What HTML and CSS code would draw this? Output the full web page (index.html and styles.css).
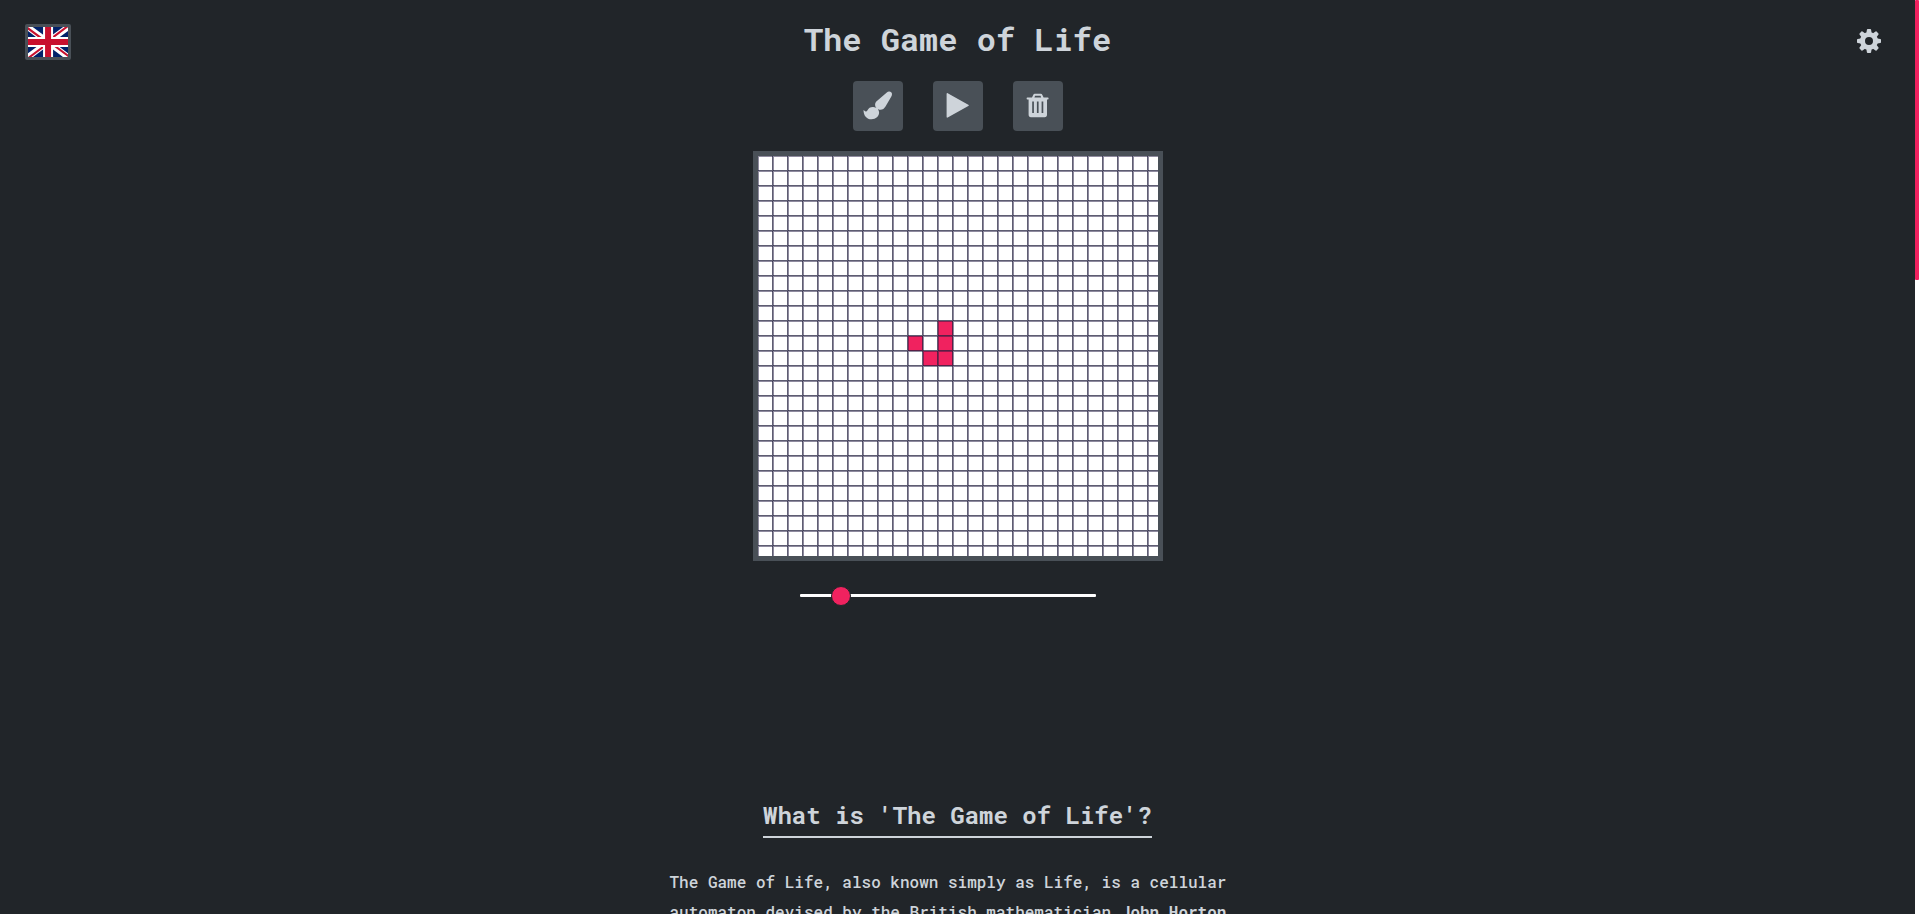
FILE: index.html
```html
<!DOCTYPE html>
<html lang="en">
<head>
<meta charset="utf-8">
<title>The Game of Life</title>
<link rel="stylesheet" href="styles.css">
</head>
<body>
<header class="header">
  <button class="language" type="button" aria-label="Language: English">
    <svg class="flag" viewBox="0 0 640 480" aria-hidden="true">
      <path fill="#012169" d="M0 0h640v480H0z"/>
      <path fill="#fff" d="m75 0 244 181L562 0h78v62L400 241l240 178v61h-80L320 301 81 480H0v-60l239-178L0 64V0z"/>
      <path fill="#c8102e" d="m424 281 216 159v40L369 281zm-184 20 6 35L54 480H0zM640 0v3L391 191l2-44L590 0zM0 0l239 176h-60L0 42z"/>
      <path fill="#fff" d="M241 0v480h160V0zM0 160v160h640V160z"/>
      <path fill="#c8102e" d="M0 193v96h640v-96zM273 0v480h96V0z"/>
    </svg>
  </button>
  <h1 class="title">The Game of Life</h1>
  <button class="settings" type="button" aria-label="Settings">
    <svg class="gear" viewBox="0 0 24 24" aria-hidden="true">
      <defs><path id="tooth" d="M9.200 5 9.900.7Q10 0 10.700 0h2.600q.7 0 .8.700L14.800 5z"/></defs>
      <path fill-rule="evenodd" d="M12 3a9 9 0 1 0 0 18 9 9 0 0 0 0-18zm0 5a4 4 0 1 1 0 8 4 4 0 0 1 0-8z"/>
      <use href="#tooth"/><use href="#tooth" transform="rotate(45 12 12)"/><use href="#tooth" transform="rotate(90 12 12)"/><use href="#tooth" transform="rotate(135 12 12)"/><use href="#tooth" transform="rotate(180 12 12)"/><use href="#tooth" transform="rotate(225 12 12)"/><use href="#tooth" transform="rotate(270 12 12)"/><use href="#tooth" transform="rotate(315 12 12)"/>
    </svg>
  </button>
</header>
<main class="main">
  <div class="controls">
    <button class="control" type="button" aria-label="Draw">
      <svg class="icon" viewBox="0 0 50 50" aria-hidden="true"><path d="M36 10.500C37.500 10.300 39 11.400 39 13c0 1-.3 1.800-.8 2.700L32.500 25.500c-1.200 2-2.900 3.300-5 3.300-3 0-5.400-2.200-5.400-5 0-1.700.8-2.900 2.100-4l9.600-8.300c.7-.5 1.400-.9 2.200-1zM20.200 25.900c3.100.1 5.800 2.300 5.900 5.300.1 4-3.300 7-7.600 7-4.900 0-8-3.600-8-9.300.8.800 2 1.500 2.700 1.500.6 0 1-.4 1.300-1.100 1-2.400 3-3.500 5.700-3.400z"/></svg>
    </button>
    <button class="control" type="button" aria-label="Play">
      <svg class="icon" viewBox="0 0 50 50" aria-hidden="true"><path d="M13.600 12.900c0-.8.500-1 1.100-.7l20.600 11.500c.7.400.7.900 0 1.300L14.700 36.500c-.6.300-1.100.1-1.100-.7z"/></svg>
    </button>
    <button class="control" type="button" aria-label="Clear">
      <svg class="icon" viewBox="0 0 50 50" aria-hidden="true"><path fill-rule="evenodd" d="M19 16.500 20.200 14q.5-1.200 1.600-1.200h6q1.100 0 1.600 1.200l1.200 2.500h4.200q.8 0 .8.900 0 1-.8 1H34V33.500q0 2.700-2.400 2.700H18q-2.400 0-2.400-2.700V18.400h-1.200q-.8 0-.8-1 0-.9.800-.9zm2.400 0h6.800l-.7-1.700h-5.400zM19.200 20.500V32h1.700V20.500zm4.700 0V32h1.700V20.500zm4.700 0V32h1.700V20.500z"/></svg>
    </button>
  </div>
  <svg class="board" width="400" height="400" shape-rendering="crispEdges" role="img" aria-label="Board">
    <defs>
      <pattern id="lines" width="15" height="15" patternUnits="userSpaceOnUse">
        <path class="line-start" d="M0 0h15v1H1v14H0z"/>
        <path class="line-end" d="M14 0h1v15H0v-1h14z"/>
      </pattern>
    </defs>
    <path class="alive" d="M180 165h15v45h-30v-15h15zM150 180h15v15h-15z"/>
    <rect width="400" height="400" fill="url(#lines)"/>
  </svg>
  <input class="speed" type="range" min="0" max="1000" value="113" aria-label="Speed">
  <section class="about">
    <h2 class="heading">What is 'The Game of Life'?</h2>
    <p class="text">The Game of Life, also known simply as Life, is a cellular automaton devised by the British mathematician <strong>John Horton</strong></p>
  </section>
</main>
<div class="scroll-track"><div class="scroll-thumb"></div></div>
</body>
</html>
```
FILE: styles.css
```css
* {
  box-sizing: border-box;
}

html,
body {
  height: 100%;
  overflow: hidden;
}

body {
  margin: 0;
  padding-right: 4px;
  background: #212529;
  color: #ced4da;
  font-family: "Roboto Mono", "DejaVu Sans Mono", monospace;
  font-size: 16px;
  font-weight: 500;
}

button {
  padding: 0;
  border: 0;
  background: none;
  color: inherit;
  cursor: pointer;
}

.header {
  display: grid;
  grid-template-columns: 1fr auto 1fr;
  align-items: center;
  height: 81px;
  padding: 0 25px;
}

.language {
  justify-self: start;
  width: 46px;
  height: 36px;
  margin-top: 2px;
  padding: 3px;
  border-radius: 2px;
  background: #495057;
}

.flag,
.gear,
.icon,
.board {
  display: block;
}

.flag {
  width: 40px;
  height: 30px;
}

.title {
  margin: 0;
  padding-bottom: 4px;
  font-size: 32px;
  line-height: 42px;
}

.settings {
  justify-self: end;
  margin-right: 9px;
}

.gear {
  width: 24px;
  height: 24px;
  fill: currentColor;
}

.main {
  display: flex;
  flex-direction: column;
  align-items: center;
}

.controls {
  display: flex;
  gap: 30px;
  margin-bottom: 20px;
}

.control {
  width: 50px;
  height: 50px;
  border-radius: 4px;
  background: #495057;
}

.icon {
  width: 50px;
  height: 50px;
  fill: currentColor;
}

.board {
  box-sizing: content-box;
  border: 5px solid #495057;
  background: #fff;
}

.line-start {
  fill: rgba(32, 24, 64, 0.5);
}

.line-end {
  fill: rgba(32, 30, 60, 0.72);
}

.alive {
  fill: #f0225f;
}

.speed {
  appearance: none;
  width: 296px;
  height: 20px;
  margin: 24px 20px 0 0;
  background: transparent;
}

.speed::-webkit-slider-runnable-track {
  height: 3px;
  border-radius: 1px;
  background: #fff;
}

.speed::-webkit-slider-thumb {
  appearance: none;
  width: 20px;
  height: 20px;
  margin-top: -8px;
  border: 1px solid #212529;
  border-radius: 50%;
  background: #f0225f;
}

.about {
  display: flex;
  flex-direction: column;
  align-items: center;
  width: 576px;
  margin-top: 193px;
}

.heading {
  margin: 0 0 29px;
  padding-bottom: 4px;
  border-bottom: 2px solid #ced4da;
  font-size: 24px;
  line-height: 34px;
}

.text {
  margin: 0;
  line-height: 30px;
}

.scroll-track {
  position: fixed;
  inset: 0 0 0 auto;
  width: 4px;
  background: #fff;
}

.scroll-thumb {
  height: 280px;
  border-radius: 1px;
  background: #f0225f;
}
```
